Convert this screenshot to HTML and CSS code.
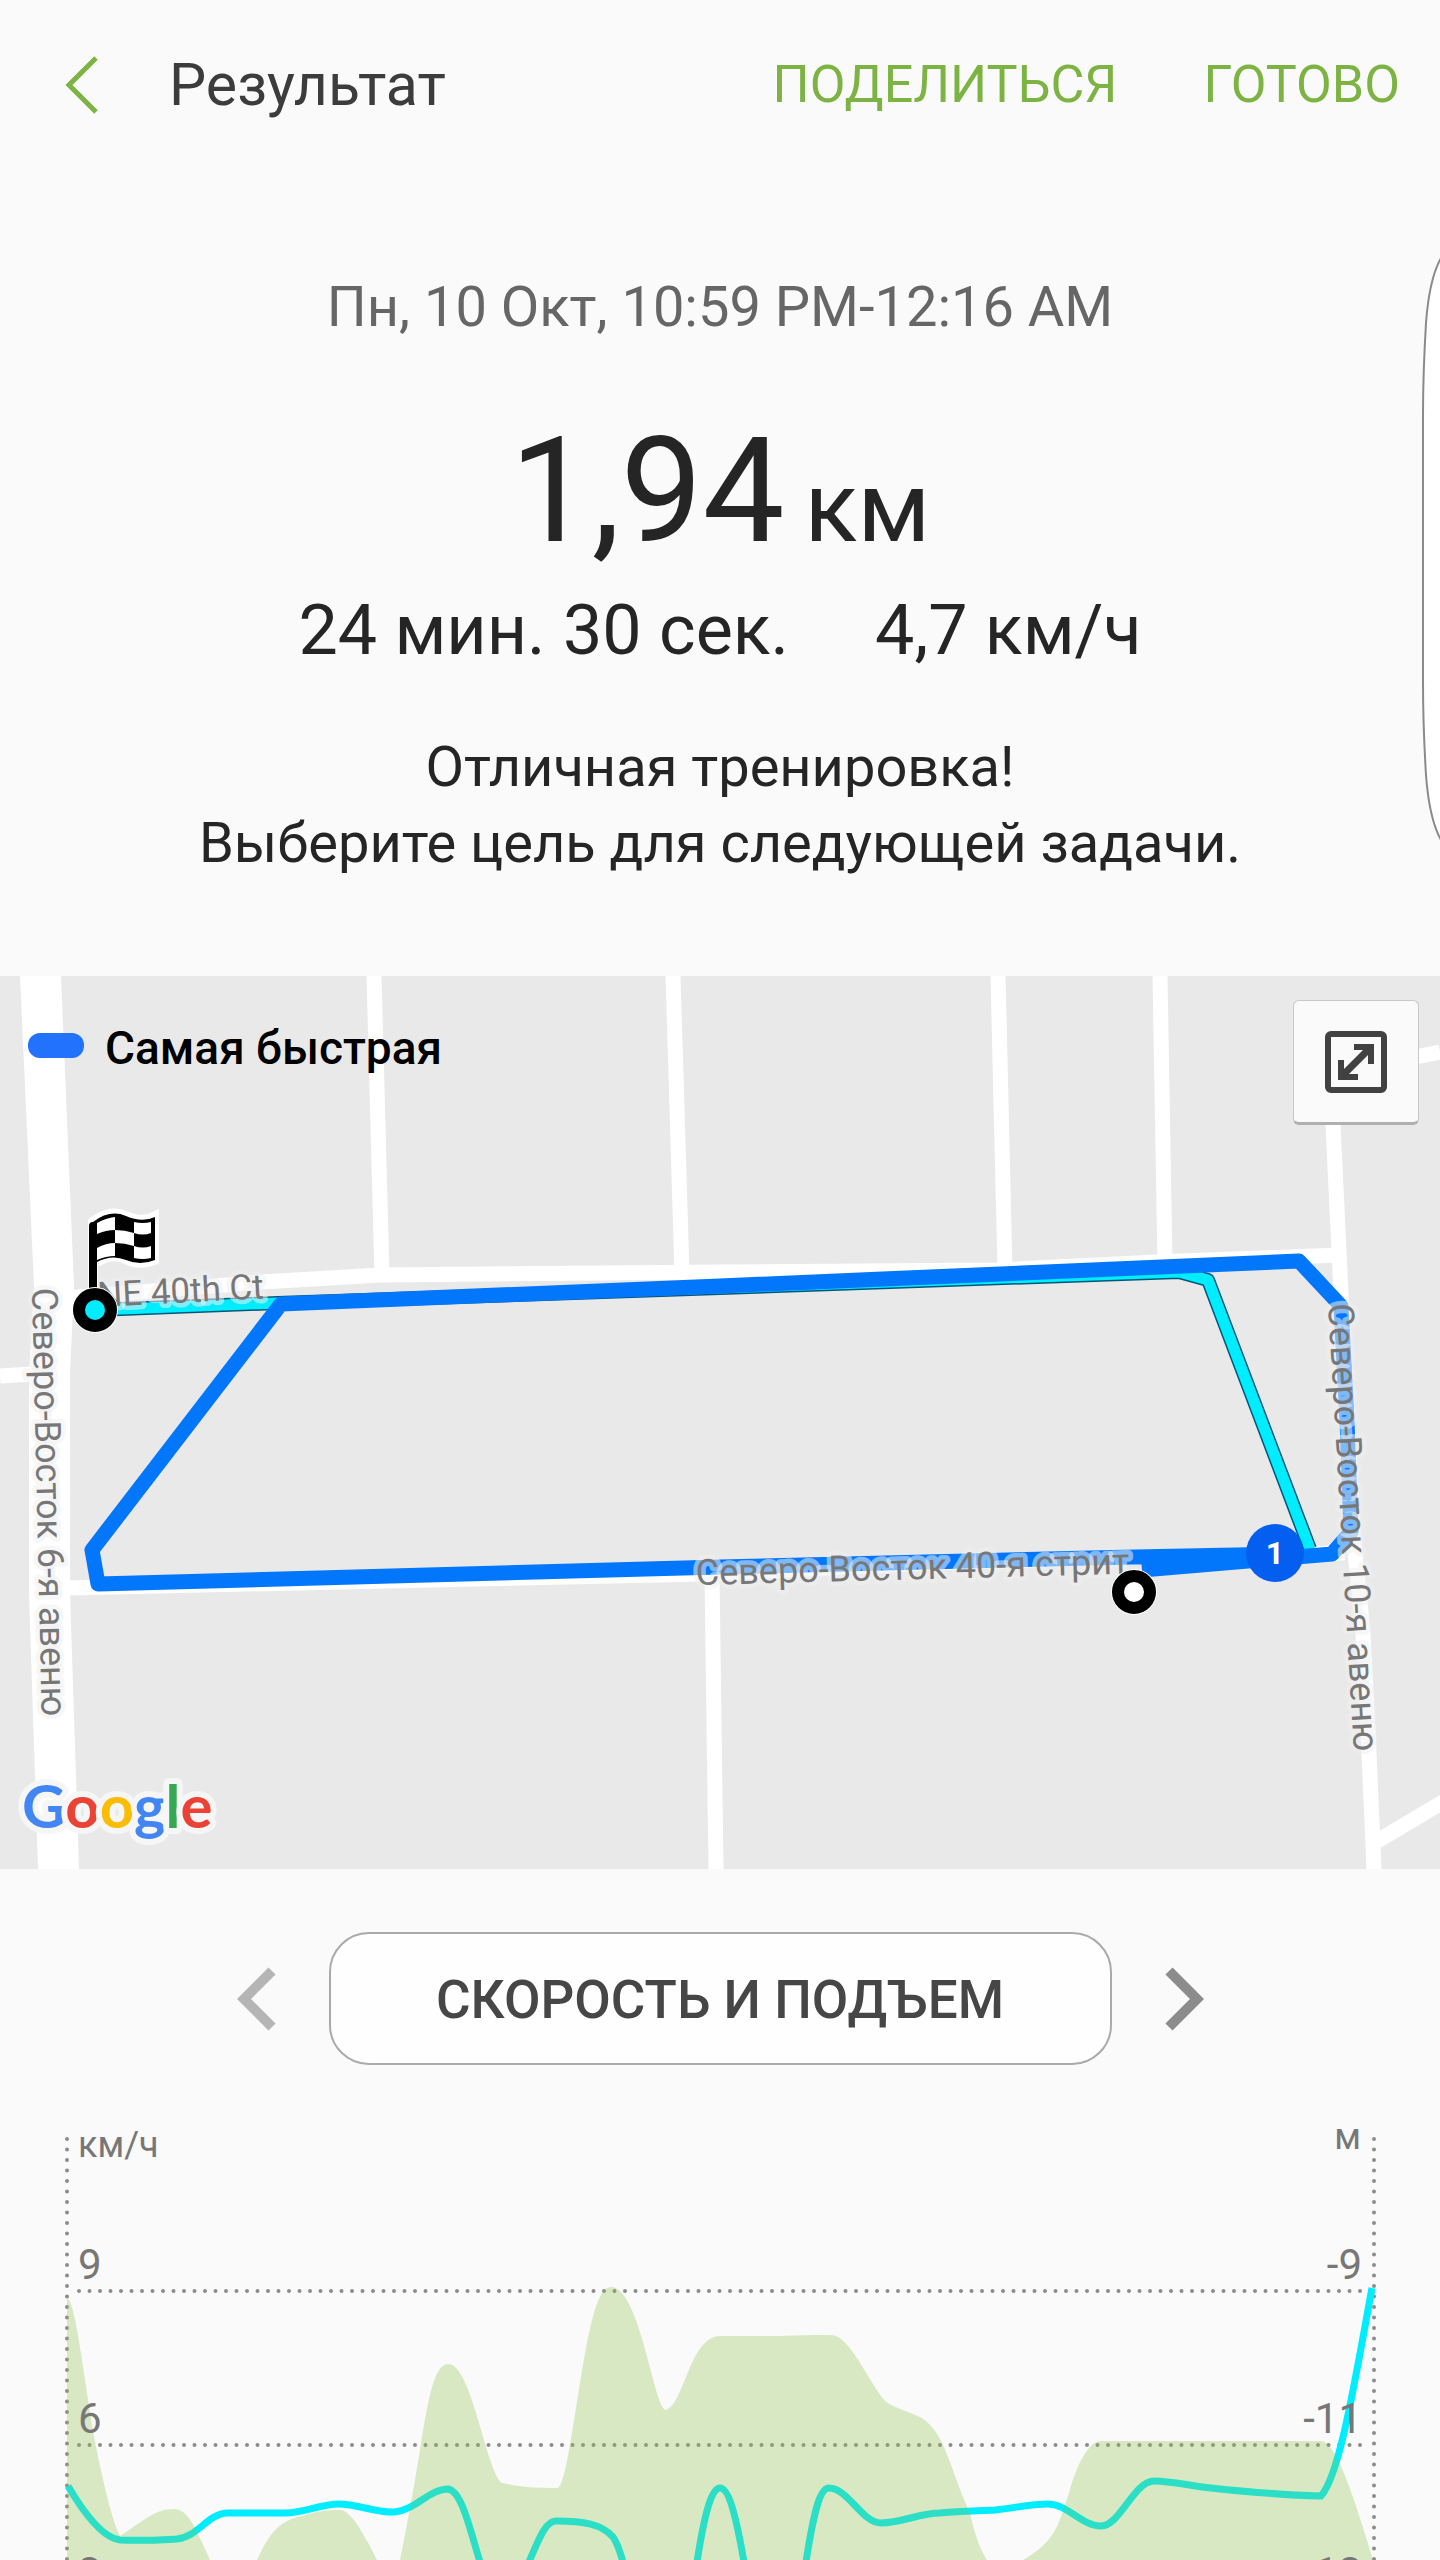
FILE: index.html
```html
<!DOCTYPE html>
<html lang="ru">
<head>
<meta charset="utf-8">
<meta name="viewport" content="width=device-width, initial-scale=1">
<title>Результат</title>
<link rel="stylesheet" href="styles.css">
</head>
<body>
<header class="topbar">
  <button class="icon-button back" type="button" aria-label="Назад">
    <svg width="36" height="60" viewBox="0 0 36 60" aria-hidden="true"><path class="back-stroke" d="M32 3 5 30 32 57"/></svg>
  </button>
  <h1 class="title">Результат</h1>
  <nav class="actions">
    <button class="text-button" type="button">ПОДЕЛИТЬСЯ</button>
    <button class="text-button" type="button">ГОТОВО</button>
  </nav>
</header>

<main>
  <section class="summary">
    <p class="date">Пн, 10 Окт, 10:59 PM-12:16 AM</p>
    <p class="distance"><span class="distance-value">1,94</span><span class="distance-unit">км</span></p>
    <p class="stats"><span>24 мин. 30 сек.</span><span>4,7 км/ч</span></p>
    <p class="message">Отличная тренировка!<br>Выберите цель для следующей задачи.</p>
  </section>

  <section class="map" aria-label="Маршрут">
    <svg class="map-canvas" viewBox="0 0 1440 893">
      <rect class="land" width="1440" height="893"/>
      <g class="roads">
        <path class="road-fill" d="M20 0H61L74 310 70 397V617L79 893H38L29 617V397L34 310Z"/>
        <path d="M0 400 32 398"/>
        <path d="M374 0 382 300M673 0 682 298M998 0 1005 294M1160 0 1165 287"/>
        <path d="M1331 98 1333 149 1341 317 1353 557 1363 657 1369 777 1374 893"/>
        <path d="M1330 98 1440 76M1374 867 1448 823"/>
        <path d="M66 322 262 306 380 299 720 296 996 294 1156 286 1340 279"/>
        <path d="M66 612 704 598 931 587 1135 581 1345 577"/>
        <path d="M712 598 716 893"/>
      </g>
      <path class="walk-edge" d="M95 334 278 327 720 312 1179 296 1208 304 1310 573"/>
      <path class="walk" d="M95 334 278 327 720 312 1179 296 1208 304 1310 573"/>
      <path class="route" d="M1142 594 1332 578 1351 556 1347 444 1341 330 1299 285 720 310 281 328 92 574 98 608 720 591 1134 581 1280 578"/>
      <g class="street">
        <text class="street-short" transform="translate(98 331) rotate(-3)">NE 40th Ct</text>
        <text transform="translate(32 312) rotate(88.7)">Северо-Восток 6-я авеню</text>
        <text transform="translate(1328 328) rotate(86.7)">Северо-Восток 10-я авеню</text>
        <text transform="translate(696 609) rotate(-1.5)">Северо-Восток 40-я стрит</text>
      </g>
      <circle class="lap" cx="1275" cy="577" r="29"/>
      <text class="lap-number" x="1275" y="588">1</text>
      <g class="flag">
        <path class="flag-halo" d="M93 334V246Q110 233 126 240T154 241V284Q140 290 126 283T97 286"/>
        <path d="M89 334V250Q89 246 93 246 110 233 126 240T155 241V284Q140 290 126 284T97 286V334Z"/>
        <path class="flag-white" d="M97 247Q106 242 115 241V254Q106 254 97 258ZM134 246Q143 248 151 246V257Q143 260 134 257ZM115 254Q125 254 134 257V270Q125 267 115 267ZM97 272Q106 267 115 267V280Q106 280 97 284ZM134 270Q143 273 151 270V282Q143 284 134 282Z"/>
      </g>
      <circle class="marker-halo" cx="95" cy="334" r="23"/>
      <circle class="marker marker-end" cx="95" cy="334" r="16"/>
      <circle class="marker-halo" cx="1134" cy="616" r="23"/>
      <circle class="marker marker-start" cx="1134" cy="616" r="16"/>
      <text class="google" x="22" y="852"><tspan class="g-blue">G</tspan><tspan class="g-red">o</tspan><tspan class="g-yellow">o</tspan><tspan class="g-blue">g</tspan><tspan class="g-green">l</tspan><tspan class="g-red">e</tspan></text>
    </svg>
    <div class="map-overlay">
      <p class="legend"><span class="legend-swatch"></span>Самая быстрая</p>
      <button class="expand" type="button" aria-label="Развернуть карту">
        <svg width="62" height="62" viewBox="0 0 62 62" aria-hidden="true">
          <rect class="expand-frame" x="3" y="3" width="56" height="56" rx="3"/>
          <path class="expand-arrow" d="M17 45 45 17"/>
          <path class="expand-head" d="M29 16H46V33M16 29V46H33"/>
        </svg>
      </button>
    </div>
  </section>

  <section class="details">
    <div class="selector">
      <button class="icon-button" type="button" aria-label="Предыдущий график"><svg width="40" height="64" viewBox="0 0 40 64" aria-hidden="true"><path class="arrow-prev" d="M35 4 7 32 35 60"/></svg></button>
      <button class="selector-button" type="button">СКОРОСТЬ И ПОДЪЕМ</button>
      <button class="icon-button" type="button" aria-label="Следующий график"><svg width="40" height="64" viewBox="0 0 40 64" aria-hidden="true"><path class="arrow-next" d="M5 4 33 32 5 60"/></svg></button>
    </div>
    <svg class="chart" viewBox="0 0 1440 460" role="img" aria-label="Скорость и подъем">
      <path class="grid" d="M67 39V460M1374 39V460M79 191H1370M79 345H1370"/>
      <path class="speed" d="M68 386C85 415 103 438 120 440 141 441 158 440 177 439 198 437 208 413 228 413H285C305 413 320 404 339 404S375 413 395 412C415 410 430 389 448 389 462 391 470 430 480 462 495 500 510 500 529 462 540 436 546 421 556 421 583 421 602 424 613 437 618 444 620 452 623 462 650 520 680 520 697 462 705 410 712 388 720 388S735 410 744 462C760 520 790 520 806 462 814 410 820 388 829 388 848 388 862 423 881 423 901 423 920 413 940 413 962 411 975 411 995 410 1015 408 1030 404 1048 404 1067 404 1082 426 1101 426 1120 426 1134 381 1154 381 1172 381 1190 386 1211 388 1248 392 1285 395 1321 396 1340 375 1355 280 1372 188"/>
      <path class="climb" d="M67 198C75 203 80 250 94 337 104 386 112 420 120 436 145 420 155 409 174 409 190 409 198 435 210 460V470H67ZM257 460C270 432 280 420 303 416 315 411 328 410 340 410 350 410 362 430 377 460V470H257ZM400 460C408 420 413 393 420 350 428 300 434 264 448 264 464 264 475 310 487 350 494 373 499 383 503 383 518 387 535 388 558 388 566 382 572 330 581 277 590 225 597 187 611 187 640 187 654 310 666 310 684 305 690 236 720 236H780C800 235 815 235 831 235 850 235 868 282 886 302 900 310 908 311 922 318 946 334 950 370 970 413 976 440 981 450 987 460V470H400ZM1023 460C1057 440 1058 425 1069 393 1078 360 1090 341 1101 341H1321C1336 341 1355 400 1372 457V470H1023Z"/>
      <g class="unit-label"><text x="78" y="57">км/ч</text><text class="right" x="1361" y="49">м</text></g>
      <g class="tick-label">
        <text x="78" y="179">9</text><text x="78" y="333">6</text><text x="78" y="487">3</text>
        <text class="right" x="1362" y="179">-9</text><text class="right" x="1362" y="333">-11</text><text class="right" x="1362" y="487">-13</text>
      </g>
    </svg>
  </section>
</main>
<aside class="edge-handle" aria-hidden="true">
  <svg width="20" height="586" viewBox="0 0 20 586"><path d="M21 2C12 18 8 40 6 67 4 100 3 120 3 160V426C3 466 4 486 6 519 8 546 12 568 21 584"/></svg>
</aside>
</body>
</html>
```
FILE: styles.css
```css
* { box-sizing: border-box; }

body {
  margin: 0;
  position: relative;
  background: #fafafa;
  color: #252525;
  font-family: Roboto, "Noto Sans", sans-serif;
}

h1, p { margin: 0; }

button {
  font: inherit;
  color: inherit;
  border: 0;
  background: none;
  padding: 0;
}

svg { display: block; }

/* Top bar */
.topbar {
  display: flex;
  align-items: center;
  height: 168px;
  padding: 2px 40px 0 64px;
}

.back { width: 105px; }
.back-stroke { fill: none; stroke: #7cb342; stroke-width: 5; }

.title {
  color: #3c3c3c;
  font-size: 59px;
  font-weight: 400;
  line-height: 72px;
}

.actions {
  display: flex;
  gap: 86px;
  margin-left: auto;
}

.text-button {
  color: #7cb342;
  font-size: 52px;
  line-height: 64px;
}

/* Summary */
.summary {
  display: flex;
  flex-direction: column;
  align-items: center;
  padding: 105px 0 95px;
  text-align: center;
}

.date { color: #666; font-size: 56px; line-height: 68px; }

.distance {
  display: flex;
  align-items: baseline;
  gap: 20px;
  margin-top: 77px;
  line-height: 148px;
}

.distance-value { font-size: 146px; }
.distance-unit { font-size: 98px; }

.stats {
  display: flex;
  gap: 86px;
  font-size: 70px;
  line-height: 84px;
  margin-top: 6px;
}

.message { font-size: 56px; line-height: 76px; margin-top: 57px; }

/* Map */
.map { position: relative; }
.map-canvas { width: 100%; height: auto; overflow: hidden; }
.land { fill: #e9e9e9; }
.roads { fill: none; stroke: #fff; stroke-width: 15; stroke-linejoin: round; }
.roads .road-fill { fill: #fff; stroke: none; }
.walk-edge { fill: none; stroke: #04567a; stroke-width: 14; stroke-linejoin: round; }
.walk { fill: none; stroke: #00ecff; stroke-width: 11; stroke-linejoin: round; }
.route { fill: none; stroke: #0277fc; stroke-width: 15; stroke-linejoin: round; }

.street {
  fill: #777;
  stroke: rgba(240, 240, 240, 0.55);
  stroke-width: 9;
  stroke-linejoin: round;
  paint-order: stroke;
  font-size: 36px;
}

.street-short { font-size: 35px; }

.lap { fill: #045ef0; }
.lap-number { fill: #fff; font-size: 32px; font-weight: 700; text-anchor: middle; }
.flag-halo { fill: none; stroke: #fff; stroke-width: 10; }
.flag-white { fill: #fff; }
.marker { stroke: #000; stroke-width: 12; }
.marker-halo { fill: #fff; }
.marker-end { fill: #00ecff; }
.marker-start { fill: #fff; }

.google {
  font-family: Lato, sans-serif;
  font-size: 60px;
  font-weight: 700;
  stroke: #f6f6f6;
  stroke-width: 12;
  stroke-linejoin: round;
  paint-order: stroke;
}

.g-blue { fill: #4285f4; }
.g-red { fill: #ea4335; }
.g-yellow { fill: #fbbc05; }
.g-green { fill: #34a853; }

.map-overlay {
  position: absolute;
  inset: 0;
  display: flex;
  justify-content: space-between;
  align-items: flex-start;
  padding: 24px 21px 0 28px;
}

.legend {
  display: flex;
  align-items: center;
  gap: 21px;
  margin-top: 20px;
  color: #000;
  font-size: 46px;
  font-weight: 500;
  line-height: 56px;
}

.legend-swatch {
  width: 56px;
  height: 25px;
  margin-bottom: 5px;
  border-radius: 12px;
  background: #2272fd;
}

.expand {
  display: grid;
  place-items: center;
  width: 126px;
  height: 125px;
  border: 1px solid #c8c8c8;
  border-bottom: 3px solid #b0b0b0;
  border-radius: 6px;
  background: #fafafa;
}

.expand-frame { fill: none; stroke: #414141; stroke-width: 6; }
.expand-arrow { stroke: #414141; stroke-width: 7; }
.expand-head { fill: none; stroke: #414141; stroke-width: 6; }

/* Chart */
.selector {
  display: flex;
  justify-content: center;
  align-items: center;
  gap: 52px;
  padding: 63px 0 35px;
}

.arrow-prev, .arrow-next { fill: none; stroke-width: 10; }
.arrow-prev { stroke: #b5b5b5; }
.arrow-next { stroke: #8c8c8c; }

.selector-button {
  width: 783px;
  height: 133px;
  padding-top: 3px;
  border: 2px solid #aaa;
  border-radius: 40px;
  background: #fefefe;
  color: #464646;
  font-size: 53px;
  font-weight: 500;
}

.chart { width: 100%; height: auto; overflow: hidden; }
.grid { fill: none; stroke: #8c8c8c; stroke-width: 4; stroke-linecap: round; stroke-dasharray: 0 10.5; }
.speed { fill: none; stroke: #00ecff; stroke-width: 7; }
.climb { fill: #8bc34a; fill-opacity: 0.31; }
.unit-label { fill: #777; font-size: 36px; }
.tick-label { fill: #777; font-size: 42px; }
.right { text-anchor: end; }

/* Edge panel handle of the phone screen */
.edge-handle {
  position: absolute;
  top: 256px;
  right: 0;
}

.edge-handle path { fill: #fff; stroke: #8a8a8a; stroke-width: 2; }
```
